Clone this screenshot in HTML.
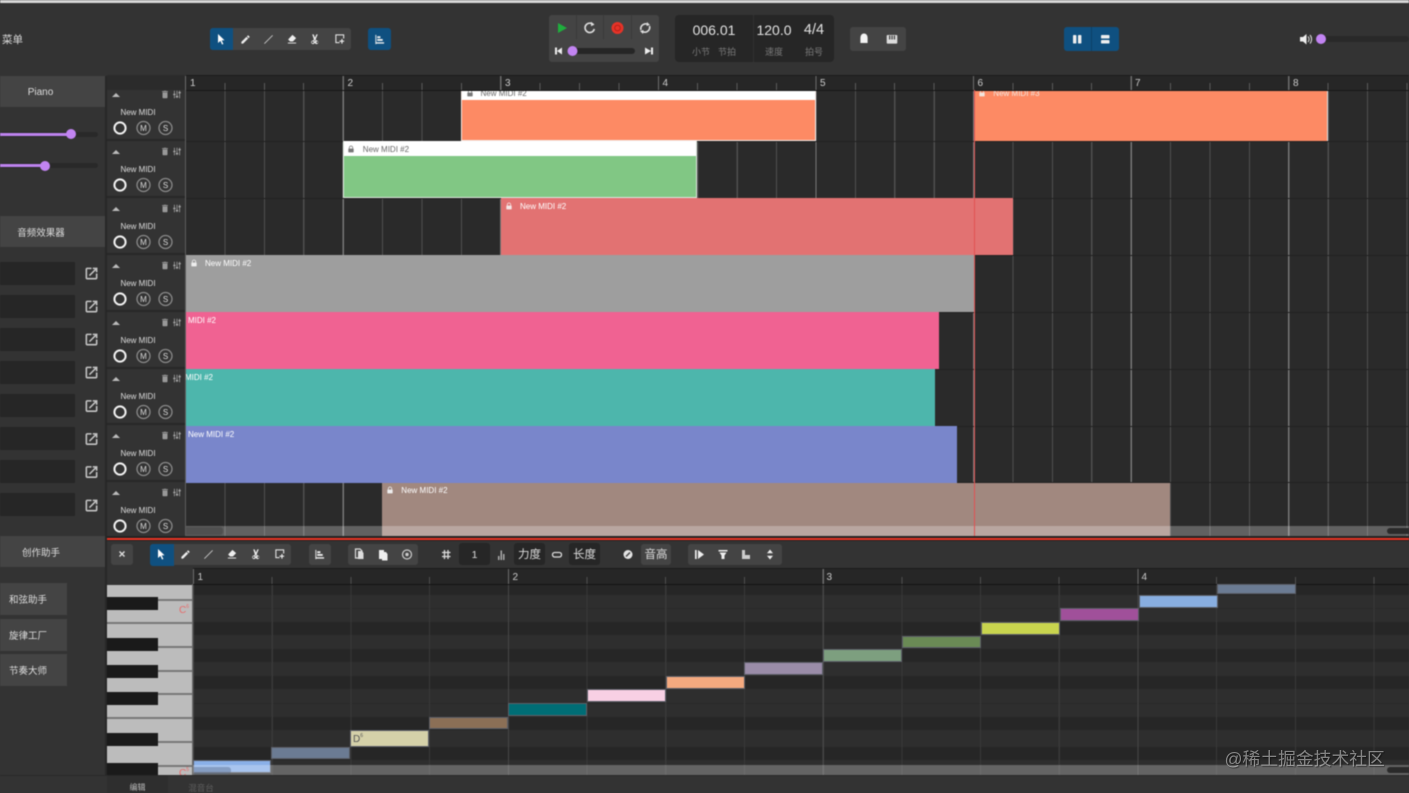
<!DOCTYPE html>
<html lang="zh"><head><meta charset="utf-8"><title>Piano</title>
<style>
html,body{margin:0;padding:0;width:1409px;height:793px;overflow:hidden;background:#333}
*{box-sizing:border-box}
#app{position:absolute;left:0;top:0;width:1409px;height:793px;overflow:hidden;background:#333;filter:blur(.45px);font-family:"Liberation Sans","Noto Sans CJK SC",sans-serif;color:#ddd}
#app div{position:absolute}
.b{background:#444}
.d{background:#262626}
.bl{background:#0f5080}
.c{text-align:center;white-space:nowrap}
.eff{left:0;width:75px;height:23px;background:#262626}
.row{left:0;width:78px;height:57px;border-bottom:2px solid #272727}
.nm{left:0;width:62px;top:24px;font-size:8px;line-height:10px;text-align:center;color:#ddd}
.row svg{position:absolute;left:0;top:0}
.clip{font-size:8px;line-height:10px;color:#fff;white-space:nowrap;overflow:hidden}
.rl{font-size:10px;line-height:12px;color:#ccc}
.note{border:1px solid #5c5f68;height:13px;width:79px}
.w{left:107px;width:85px;height:2px;background:#777}
.k{left:107px;width:51px;height:13px;background:#1a1a1a}
.band{left:193px;width:1216px;background:#262626}
svg{display:block;overflow:visible}
#wm{position:absolute;left:1224.500px;top:748px;font:17.800px/22px "Liberation Sans","Noto Sans CJK SC",sans-serif;color:rgba(215,215,215,.55);text-shadow:1px 1px 1px rgba(0,0,0,.45);white-space:nowrap}
</style></head><body>
<svg width="0" height="0" style="position:absolute">
<defs>
<symbol id="cur" viewBox="0 0 24 24"><path fill="#fff" d="M6 2l13 12.400-5.600.4 3.400 7.200-2.700 1.100-3.200-7.300L6 20z"/></symbol>
<symbol id="pen" viewBox="0 0 24 24"><path fill="#eee" d="M3 17.250V21h3.750L17.810 9.940l-3.750-3.750L3 17.250zM20.710 7.040a1 1 0 000-1.410l-2.340-2.340a1 1 0 00-1.410 0l-1.830 1.830 3.750 3.750 1.830-1.830z"/></symbol>
<symbol id="lin" viewBox="0 0 24 24"><path stroke="#ddd" stroke-width="1.800" fill="none" d="M3 21L21 3"/></symbol>
<symbol id="era" viewBox="0 0 24 24"><path fill="#eee" d="M13 3l8 7-7 7.500H8L3.500 13zM3 20h18v1.800H3z"/></symbol>
<symbol id="cut" viewBox="0 0 24 24"><path fill="#eee" d="M6 2h3l3 7 3-7h3l-4.500 10.500 1.200 2.700a4 4 0 11-2 1L12 13.500l-1.700 2.700a4 4 0 11-2-1l1.200-2.700zM7 17a2 2 0 100 4 2 2 0 000-4zm10 0a2 2 0 100 4 2 2 0 000-4z"/></symbol>
<symbol id="sel" viewBox="0 0 24 24"><path fill="none" stroke="#eee" stroke-width="2.200" d="M11 20H3V3h17v8"/><path fill="#eee" d="M15 12h2.500v3.500H21V18h-3.500v4H15v-4h-4v-2.500h4z"/></symbol>
<symbol id="ali" viewBox="0 0 24 24"><path fill="#eee" d="M3 2h2v20H3zM7 5h7v4H7zM7 11h12v4H7zM5 18h17v3H5z"/></symbol>
<symbol id="tr" viewBox="0 0 24 24"><path fill="#999" d="M6 19c0 1.100.9 2 2 2h8c1.100 0 2-.9 2-2V7H6v12zM19 4h-3.500l-1-1h-5l-1 1H5v2h14V4z"/></symbol>
<symbol id="mx" viewBox="0 0 24 24"><path fill="none" stroke="#aaa" stroke-width="2" d="M5 2v8M5 15v7M12 2v15M12 21v1M19 2v3M19 9v13"/><path fill="#aaa" d="M2 10h6v4H2zM9 16h6v4H9zM16 5h6v4h-6z"/></symbol>
<symbol id="ext" viewBox="0 0 24 24"><path fill="#c4c4c4" d="M19 19H5V5h7V2.500H5C3.600 2.500 2.500 3.600 2.500 5v14c0 1.400 1.100 2.500 2.500 2.500h14c1.400 0 2.500-1.100 2.500-2.500v-7H19v7zM14 2.500V5h3.300l-9.500 9.500 1.700 1.700L19 6.700V10h2.500V2.500H14z"/></symbol>
<symbol id="lock" viewBox="0 0 12 12"><path fill="none" stroke="currentColor" stroke-width="1.200" d="M3.500 6V4a2.500 2.500 0 015 0v2"/><rect x="2" y="5.500" width="8" height="5.500" fill="currentColor" rx=".6"/></symbol>
<symbol id="track" viewBox="0 0 78 57">
<path fill="#bbb" d="M5 13l4-4 4 4z"/>
<use href="#tr" x="53" y="5.500" width="10" height="10"/>
<use href="#mx" x="65.500" y="6" width="9" height="9"/>
<circle cx="13" cy="44" r="5.600" fill="none" stroke="#f2f2f2" stroke-width="2"/>
<circle cx="36.500" cy="44" r="6.500" fill="none" stroke="#8a8a8a" stroke-width="1.300"/>
<circle cx="58.500" cy="44" r="6.500" fill="none" stroke="#8a8a8a" stroke-width="1.300"/>
<text x="36.500" y="47" font-family="Liberation Sans" font-size="8" fill="#ddd" text-anchor="middle">M</text>
<text x="58.500" y="47" font-family="Liberation Sans" font-size="8" fill="#ddd" text-anchor="middle">S</text>
</symbol>
</defs></svg>
<div id="app">
<div style="left:0;top:0;width:1409px;height:3px;background:#d8d8d8"></div>

<!-- top toolbar -->
<div style="left:2px;top:33px;font-size:10.500px;line-height:14px;color:#ddd">菜单</div>
<div class="b" style="left:210px;top:28px;width:141px;height:22px;border-radius:3px"></div>
<div class="bl" style="left:210px;top:28px;width:23px;height:22px;border-radius:3px 0 0 3px"></div>
<div class="bl" style="left:368px;top:28px;width:23px;height:22px;border-radius:3px"></div>
<svg style="position:absolute;left:0;top:0" width="1409" height="80">
<use href="#cur" x="215" y="33" width="12" height="12"/>
<use href="#pen" x="240" y="34" width="11" height="11"/>
<use href="#lin" x="263" y="34" width="11" height="11"/>
<use href="#era" x="286.500" y="33.500" width="11" height="11"/>
<use href="#cut" x="309.500" y="33.500" width="11" height="11"/>
<use href="#sel" x="334.500" y="33.500" width="11" height="11"/>
<use href="#ali" x="374" y="34" width="11" height="11"/>
</svg>

<div class="b" style="left:549px;top:15px;width:110px;height:47px;border-radius:3px"></div>
<div style="left:576px;top:15px;width:1px;height:24px;background:#3a3a3a"></div>
<div style="left:603px;top:15px;width:1px;height:24px;background:#3a3a3a"></div>
<div style="left:631px;top:15px;width:1px;height:24px;background:#3a3a3a"></div>
<div class="d" style="left:572px;top:48px;width:63px;height:6px;border-radius:3px"></div>
<div class="d" style="left:675px;top:15px;width:159px;height:47px;border-radius:4px"></div>
<div style="left:753px;top:15px;width:1px;height:47px;background:#303030"></div>
<div class="c" style="left:684px;top:21px;width:60px;font-size:14px;line-height:18px;color:#e2e2e2">006.01</div>
<div class="c" style="left:744px;top:21px;width:60px;font-size:14px;line-height:18px;color:#e2e2e2">120.0</div>
<div class="c" style="left:794px;top:21px;width:40px;font-size:14.500px;line-height:18px;color:#e2e2e2">4/4</div>
<div class="c" style="left:686px;top:46px;width:30px;font-size:9px;line-height:13px;color:#7a7a7a">小节</div>
<div class="c" style="left:712px;top:46px;width:30px;font-size:9px;line-height:13px;color:#7a7a7a">节拍</div>
<div class="c" style="left:759px;top:46px;width:30px;font-size:9px;line-height:13px;color:#7a7a7a">速度</div>
<div class="c" style="left:799px;top:46px;width:30px;font-size:9px;line-height:13px;color:#7a7a7a">拍号</div>
<div class="b" style="left:850px;top:27px;width:56px;height:24px;border-radius:3px"></div>
<div class="bl" style="left:1064px;top:27px;width:55px;height:24px;border-radius:3px"></div>
<div style="left:1091px;top:27px;width:1px;height:24px;background:#0b4068"></div>
<div style="left:1321px;top:36px;width:88px;height:6px;background:#292929;border-radius:3px"></div>
<svg style="position:absolute;left:0;top:0" width="1409" height="80">
<path fill="#1fae3d" d="M558 23l9 5-9 5z"/>
<path fill="none" stroke="#ddd" stroke-width="1.600" d="M593.500 25a4.700 4.700 0 10.800 4"/><path fill="#ddd" d="M591 21.800l3.500 2.700-3.500 1.700z"/>
<circle cx="617.500" cy="28" r="6" fill="#e53328"/><circle cx="617.500" cy="28" r="2.800" fill="none" stroke="#b52018" stroke-width="1"/>
<path fill="none" stroke="#ddd" stroke-width="1.600" d="M641 30a4.800 4.800 0 017-5.500M649.500 26a4.800 4.800 0 01-7 5.500"/><path fill="#ddd" d="M647 22l3 3-3.500 1zM643 34l-3-3 3.500-1z"/>
<path fill="#eee" d="M555 47.500h2v7h-2zM562 47.500v7l-5-3.500z"/>
<path fill="#eee" d="M652 47.500h2v7h-2zM646 47.500v7l6-3.500z" transform="translate(-1 0)"/>
<circle cx="572.500" cy="51" r="5" fill="#c284f2"/>
<path fill="#f4f4f4" d="M864 33.500c-2.500 0-3.600 2.200-3.600 4.700V43h7.200v-4.800c0-2.500-1.100-4.700-3.600-4.700z"/>
<path fill="#ddd" d="M887.500 35h9a.8.800 0 01.8.800v7a.8.800 0 01-.8.800h-9a.8.800 0 01-.8-.8v-7a.8.800 0 01.8-.8z"/><path fill="#444" d="M889 35.500h1.300v4H889zM891.400 35.500h1.300v4h-1.300zM893.800 35.500h1.300v4h-1.300z"/>
<rect x="1073" y="35" width="3.400" height="8.500" rx=".8" fill="#eee"/><rect x="1078" y="35" width="3.400" height="8.500" rx=".8" fill="#eee"/>
<rect x="1101" y="35" width="8.500" height="3.500" rx=".8" fill="#eee"/><rect x="1101" y="40" width="8.500" height="3.500" rx=".8" fill="#eee"/>
<path fill="#eee" d="M1300 37v4.500h3l3.500 3v-10.500l-3.500 3z"/><path fill="none" stroke="#ddd" stroke-width="1" d="M1308 36.500a4 4 0 010 5.500M1310 35a6.500 6.500 0 010 8.500"/>
<circle cx="1321" cy="39" r="5" fill="#c284f2"/>
</svg>

<!-- left panel -->
<div style="left:105px;top:76px;width:2px;height:699px;background:#272727"></div>
<div class="b c" style="left:0;top:76px;width:105px;height:31px;font-size:10px;line-height:33px;padding-right:24px">Piano</div>
<div style="left:0;top:132px;width:98px;height:5px;background:#292929;border-radius:3px"></div>
<div style="left:0;top:132.500px;width:71px;height:3px;background:#bd83ee"></div>
<div style="left:66px;top:129px;width:10px;height:10px;border-radius:50%;background:#c284f2"></div>
<div style="left:0;top:163px;width:98px;height:5px;background:#292929;border-radius:3px"></div>
<div style="left:0;top:164px;width:45px;height:3px;background:#bd83ee"></div>
<div style="left:40px;top:161px;width:10px;height:10px;border-radius:50%;background:#c284f2"></div>
<div class="b c" style="left:0;top:216px;width:105px;height:31px;font-size:9.500px;line-height:35.500px;padding-right:23px">音频效果器</div>
<div class="eff" style="top:262px"></div>
<div class="eff" style="top:295px"></div>
<div class="eff" style="top:328px"></div>
<div class="eff" style="top:361px"></div>
<div class="eff" style="top:394px"></div>
<div class="eff" style="top:427px"></div>
<div class="eff" style="top:460px"></div>
<div class="eff" style="top:493px"></div>
<svg style="position:absolute;left:84px;top:260px" width="16" height="260">
<use href="#ext" x="0" y="6" width="15" height="15"/>
<use href="#ext" x="0" y="39" width="15" height="15"/>
<use href="#ext" x="0" y="72" width="15" height="15"/>
<use href="#ext" x="0" y="105" width="15" height="15"/>
<use href="#ext" x="0" y="138.500" width="15" height="15"/>
<use href="#ext" x="0" y="171.500" width="15" height="15"/>
<use href="#ext" x="0" y="204.500" width="15" height="15"/>
<use href="#ext" x="0" y="238" width="15" height="15"/>
</svg>
<div class="b c" style="left:0;top:536px;width:105px;height:31px;font-size:9.500px;line-height:35.500px;padding-right:23px">创作助手</div>
<div class="b c" style="left:0;top:583px;width:67px;height:32px;font-size:9.500px;line-height:35px;padding-right:11px">和弦助手</div>
<div class="b c" style="left:0;top:619px;width:67px;height:32px;font-size:9.500px;line-height:35px;padding-right:11px">旋律工厂</div>
<div class="b c" style="left:0;top:654px;width:67px;height:32px;font-size:9.500px;line-height:35px;padding-right:11px">节奏大师</div>

<!-- tracks list -->
<div style="left:107px;top:75px;width:78px;height:15px;background:#2b2b2b"></div>
<div style="left:107px;top:90px;width:78px;height:446px;overflow:hidden;background:#333">
  <div class="row" style="top:-6.500px"><div class="nm">New MIDI</div><svg width="78" height="57"><use href="#track" width="78" height="57"/></svg></div>
  <div class="row" style="top:50.500px"><div class="nm">New MIDI</div><svg width="78" height="57"><use href="#track" width="78" height="57"/></svg></div>
  <div class="row" style="top:107.500px"><div class="nm">New MIDI</div><svg width="78" height="57"><use href="#track" width="78" height="57"/></svg></div>
  <div class="row" style="top:164.500px"><div class="nm">New MIDI</div><svg width="78" height="57"><use href="#track" width="78" height="57"/></svg></div>
  <div class="row" style="top:221.500px"><div class="nm">New MIDI</div><svg width="78" height="57"><use href="#track" width="78" height="57"/></svg></div>
  <div class="row" style="top:278px"><div class="nm">New MIDI</div><svg width="78" height="57"><use href="#track" width="78" height="57"/></svg></div>
  <div class="row" style="top:335px"><div class="nm">New MIDI</div><svg width="78" height="57"><use href="#track" width="78" height="57"/></svg></div>
  <div class="row" style="top:391.500px;border-bottom:0"><div class="nm">New MIDI</div><svg width="78" height="57"><use href="#track" width="78" height="57"/></svg></div>
</div>

<!-- arrangement ruler -->
<div style="left:186px;top:75px;width:1223px;height:16px;background:#262626;border-top:1px solid #1b1b1b;border-bottom:1px solid #161616"></div>
<div style="left:185.300px;top:83px;width:1224px;height:7px;background:repeating-linear-gradient(90deg,#5c5c5c 0 1px,transparent 1px 39.400px)"></div>
<div style="left:185.300px;top:76px;width:1224px;height:14px;background:repeating-linear-gradient(90deg,#6d6d6d 0 1.200px,transparent 1.200px 157.600px)"></div>
<div class="rl" style="left:190px;top:78px">1</div><div class="rl" style="left:347.500px;top:78px">2</div><div class="rl" style="left:505px;top:78px">3</div><div class="rl" style="left:662.500px;top:78px">4</div><div class="rl" style="left:820px;top:78px">5</div><div class="rl" style="left:977.500px;top:78px">6</div><div class="rl" style="left:1135px;top:78px">7</div><div class="rl" style="left:1293px;top:78px">8</div>

<!-- arrangement grid -->
<div style="left:185px;top:91px;width:1224px;height:445px;background:#2a2a2a"></div>
<div style="left:185.300px;top:91px;width:1224px;height:445px;background:repeating-linear-gradient(90deg,#4f4f4f 0 1.200px,transparent 1.200px 39.400px)"></div>
<div style="left:185.300px;top:91px;width:1224px;height:445px;background:repeating-linear-gradient(90deg,#777 0 1.200px,transparent 1.200px 157.600px)"></div>
<div style="left:184.500px;top:90px;width:1.500px;height:446px;background:#5e5e5e"></div>
<div style="left:186px;top:140.500px;width:1223px;height:1px;background:#222"></div>
<div style="left:186px;top:197.500px;width:1223px;height:1px;background:#222"></div>
<div style="left:186px;top:254.500px;width:1223px;height:1px;background:#222"></div>
<div style="left:186px;top:311.500px;width:1223px;height:1px;background:#222"></div>
<div style="left:186px;top:368.500px;width:1223px;height:1px;background:#222"></div>
<div style="left:186px;top:425.500px;width:1223px;height:1px;background:#222"></div>
<div style="left:186px;top:481.500px;width:1223px;height:1px;background:#222"></div>

<!-- clips -->
<div class="clip" style="left:461px;top:90.500px;width:355px;height:50.500px;background:#fd8a64;border:1px solid #f4e9e4;border-top:0"><div style="left:-1px;top:0;width:355px;height:9px;background:#fff"></div><div style="left:18.500px;top:-2px;color:#666">New MIDI #2</div><svg style="position:absolute;left:3.500px;top:-2px;color:#777" width="8" height="8"><use href="#lock" width="8" height="8"/></svg></div>
<div class="clip" style="left:973.800px;top:90.500px;width:354.500px;height:50.500px;background:#fd8a64;border-right:1px solid #ddd"><div style="left:19.500px;top:-2px;color:#f3e6df">New MIDI #3</div><svg style="position:absolute;left:4.500px;top:-2px;color:#f3e6df" width="8" height="8"><use href="#lock" width="8" height="8"/></svg></div>
<div class="clip" style="left:343.300px;top:141px;width:354px;height:57px;background:#81c784;border:1px solid #dfe8df;border-top:0"><div style="left:-1px;top:0;width:354px;height:15px;background:#fff"></div><div style="left:18.500px;top:4px;color:#666">New MIDI #2</div><svg style="position:absolute;left:3px;top:3.500px;color:#777" width="8" height="8"><use href="#lock" width="8" height="8"/></svg></div>
<div class="clip" style="left:501px;top:198px;width:511.500px;height:57px;background:#e27272"><div style="left:19px;top:4px">New MIDI #2</div><svg style="position:absolute;left:4px;top:3.500px;color:#f4e6e6" width="8" height="8"><use href="#lock" width="8" height="8"/></svg></div>
<div class="clip" style="left:186px;top:255px;width:788px;height:57px;background:#9e9e9e"><div style="left:19px;top:4px">New MIDI #2</div><svg style="position:absolute;left:3.500px;top:3.500px;color:#eee" width="8" height="8"><use href="#lock" width="8" height="8"/></svg></div>
<div class="clip" style="left:186px;top:312px;width:752.500px;height:57px;background:#f06292"><div style="left:2px;top:4px">MIDI #2</div></div>
<div class="clip" style="left:186px;top:369px;width:748.500px;height:57px;background:#4db6ac"><div style="left:-1px;top:4px">MIDI #2</div></div>
<div class="clip" style="left:186px;top:426px;width:770.500px;height:56.500px;background:#7986cb"><div style="left:2px;top:4px">New MIDI #2</div></div>
<div class="clip" style="left:382.300px;top:482.500px;width:788px;height:53.500px;background:#a1887f"><div style="left:19px;top:3.500px">New MIDI #2</div><svg style="position:absolute;left:4px;top:3.500px;color:#eee" width="8" height="8"><use href="#lock" width="8" height="8"/></svg></div>

<div style="left:186px;top:526px;width:1223px;height:10px;background:rgba(255,255,255,.26)"></div>
<div style="left:186px;top:526.500px;width:37px;height:8px;background:rgba(60,60,60,.45);border-radius:0 3px 3px 0"></div>
<div style="left:1387px;top:527.500px;width:22px;height:6px;background:#2a2a2a;border-radius:3px 0 0 3px"></div>
<div style="left:973.800px;top:90px;width:1.200px;height:446px;background:#e05252"></div>

<!-- red divider -->
<div style="left:107px;top:536px;width:1302px;height:5px;background:#222"></div>
<div style="left:107px;top:537.500px;width:1302px;height:2.200px;background:#ea3323"></div>

<!-- lower toolbar -->
<div class="b" style="left:111px;top:544px;width:22px;height:21px;border-radius:3px"></div>
<div class="b" style="left:150px;top:544px;width:141px;height:21px;border-radius:3px"></div>
<div class="bl" style="left:150px;top:543.500px;width:24px;height:22px;border-radius:3px 0 0 3px"></div>
<div class="b" style="left:309px;top:544px;width:22px;height:21px;border-radius:3px"></div>
<div class="b" style="left:348px;top:544px;width:70px;height:21px;border-radius:3px"></div>
<div class="d c" style="left:459px;top:543px;width:31px;height:22px;border-radius:3px;font-size:10.500px;line-height:25px">1</div>
<div class="d c" style="left:514px;top:543px;width:31px;height:22px;border-radius:3px;font-size:11.500px;line-height:24px">力度</div>
<div class="d c" style="left:569px;top:543px;width:31px;height:22px;border-radius:3px;font-size:11.500px;line-height:24px">长度</div>
<div class="b c" style="left:641px;top:544px;width:30px;height:21px;border-radius:3px;font-size:11.500px;line-height:23px">音高</div>
<div class="b" style="left:688px;top:544px;width:94px;height:21px;border-radius:3px"></div>
<svg style="position:absolute;left:0;top:536px" width="1409" height="34">
<path stroke="#ddd" stroke-width="1.400" d="M119.500 15.500l5 5M124.500 15.500l-5 5"/>
<use href="#cur" x="155" y="12" width="12" height="12"/>
<use href="#pen" x="180" y="13" width="11" height="11"/>
<use href="#lin" x="203" y="13" width="11" height="11"/>
<use href="#era" x="226.500" y="12.500" width="11" height="11"/>
<use href="#cut" x="250.500" y="12.500" width="11" height="11"/>
<use href="#sel" x="274.500" y="12.500" width="11" height="11"/>
<use href="#ali" x="314" y="13" width="11" height="11"/>
<path fill="none" stroke="#ddd" stroke-width="1.200" d="M355.500 22v-9h4.500l2 2v7z"/><path fill="#ddd" d="M358 15h4l1.500 2v6H358z"/>
<path fill="#eee" d="M379 14h5v9h-5z"/><path fill="#eee" d="M382 16h4l1.500 2v6.500H382z"/>
<circle cx="407" cy="18.500" r="4.500" fill="none" stroke="#ccc" stroke-width="1.200"/><circle cx="407" cy="18.500" r="1.700" fill="#ccc"/>
<path stroke="#ddd" stroke-width="1.300" d="M444.500 14v9M448 14v9M442 16.500h8.500M442 20.500h8.500"/>
<path fill="#aaa" d="M498 20h1.500v4H498zM500.500 14.500h1.500V24h-1.500zM503 18h1.500v6H503z"/>
<rect x="552.500" y="16.500" width="9" height="4.500" rx="2.200" fill="none" stroke="#ddd" stroke-width="1.300"/>
<circle cx="628" cy="18.500" r="4.500" fill="#e4e4e4"/><path stroke="#444" stroke-width="1.500" d="M626 20.500l4-4"/>
<path fill="#eee" d="M695 14h1.700v9H695zM698 14l6 4.500-6 4.500z"/>
<path fill="#eee" d="M718.500 14h9v1.500h-9zM719.500 16.500h7l-2 3v3.500h-3v-3.500z"/>
<path fill="#ccc" d="M742 14h3v5h5v4h-8z"/>
<path fill="#eee" d="M770 13.500l3 3.700h-6zM770 23.500l3-3.700h-6z"/>
</svg>

<!-- piano roll ruler -->
<div style="left:193px;top:568px;width:1216px;height:16.500px;background:#262626;border-top:1px solid #1c1c1c;border-bottom:1px solid #141414"></div>
<div style="left:192.500px;top:577px;width:1217px;height:7px;background:repeating-linear-gradient(90deg,#4f4f4f 0 1px,transparent 1px 78.700px)"></div>
<div style="left:192.500px;top:569px;width:1217px;height:15px;background:repeating-linear-gradient(90deg,#6d6d6d 0 1.200px,transparent 1.200px 314.800px)"></div>
<div class="rl" style="left:197.500px;top:572px">1</div><div class="rl" style="left:512.500px;top:572px">2</div><div class="rl" style="left:826.500px;top:572px">3</div><div class="rl" style="left:1141.500px;top:572px">4</div>

<!-- piano roll grid -->
<div style="left:193px;top:584.500px;width:1216px;height:191px;background:#2e2e2e"></div>
<div class="band" style="top:585px;height:10px"></div>
<div class="band" style="top:608px;height:1px;background:#292929"></div>
<div class="band" style="top:622px;height:13px"></div>
<div class="band" style="top:649px;height:13px"></div>
<div class="band" style="top:676px;height:12.500px"></div>
<div class="band" style="top:703px;height:1px;background:#292929"></div>
<div class="band" style="top:717px;height:12.500px"></div>
<div class="band" style="top:747px;height:13px"></div>
<div style="left:192.500px;top:584.500px;width:1217px;height:191px;background:repeating-linear-gradient(90deg,#393939 0 1.100px,transparent 1.100px 78.700px)"></div>
<div style="left:192.500px;top:584.500px;width:1217px;height:191px;background:repeating-linear-gradient(90deg,#464646 0 1.200px,transparent 1.200px 314.800px)"></div>

<!-- piano keys -->
<div style="left:107px;top:584.500px;width:85.500px;height:190.500px;background:#bcbcbc"></div>
<div style="left:191.500px;top:584px;width:1.500px;height:191px;background:#6a6a6a"></div>
<div class="w" style="top:598.500px"></div><div class="w" style="top:622px"></div><div class="w" style="top:646px"></div><div class="w" style="top:669.500px"></div><div class="w" style="top:693px"></div><div class="w" style="top:717px"></div><div class="w" style="top:740.500px"></div><div class="w" style="top:764.500px"></div>
<div class="k" style="top:597px"></div><div class="k" style="top:638px"></div><div class="k" style="top:664.500px"></div><div class="k" style="top:692px"></div><div class="k" style="top:732.500px"></div><div class="k" style="top:763px"></div>
<div style="left:179px;top:603.500px;width:14px;font-size:10px;line-height:14px;color:#e76a6a;white-space:nowrap">C<sup style="font-size:5px;vertical-align:5px;line-height:0">6</sup></div>
<div style="left:179px;top:767px;width:14px;height:8px;overflow:hidden;font-size:10px;line-height:14px;color:#e76a6a;white-space:nowrap">C<sup style="font-size:5px;vertical-align:5px;line-height:0">5</sup></div>

<!-- notes -->
<div class="note" style="left:192.500px;top:760px;height:13px;background:#8ab0e8;width:78px"></div>
<div class="note" style="left:271px;top:747px;height:12px;background:#6b7b93"></div>
<div class="note" style="left:350px;top:729.500px;height:17px;background:#d5d1a9;color:#555;font-size:10px;line-height:17px;padding-left:2px;white-space:nowrap">D<sup style="font-size:5px;vertical-align:5px;line-height:0">6</sup></div>
<div class="note" style="left:428.500px;top:716.500px;height:12.500px;background:#8b6f56"></div>
<div class="note" style="left:507.500px;top:702.500px;height:13.500px;background:#006d75"></div>
<div class="note" style="left:586.500px;top:689px;height:12.500px;background:#f8d0e4"></div>
<div class="note" style="left:665.500px;top:676px;height:12.500px;background:#f4a97f"></div>
<div class="note" style="left:743.500px;top:662px;height:13px;background:#9a8ca8"></div>
<div class="note" style="left:822.500px;top:649px;height:12.500px;background:#7d9f7f"></div>
<div class="note" style="left:901.500px;top:635.500px;height:12.500px;background:#6a8a55"></div>
<div class="note" style="left:980.500px;top:622px;height:12.500px;background:#c8d44e"></div>
<div class="note" style="left:1059.500px;top:608px;height:13px;background:#a0509a"></div>
<div class="note" style="left:1138.500px;top:595px;height:12.500px;background:#88aee0"></div>
<div class="note" style="left:1217px;top:584px;height:10px;background:#6b7b93"></div>

<div style="left:193px;top:765px;width:1216px;height:10px;background:rgba(255,255,255,.26)"></div>
<div style="left:194px;top:766.500px;width:37px;height:7px;background:rgba(90,110,140,.45);border-radius:0 3px 3px 0"></div>
<div style="left:1387px;top:767px;width:22px;height:6px;background:#2a2a2a;border-radius:3px 0 0 3px"></div>

<!-- bottom tabs -->
<div style="left:0;top:775px;width:1409px;height:18px;background:#333;border-top:1px solid #292929"></div>
<div class="c" style="left:107px;top:776px;width:61px;height:17px;background:#2e2e2e;font-size:8px;line-height:23px;color:#bbb">编辑</div>
<div class="c" style="left:186px;top:776px;width:30px;height:17px;font-size:8.500px;line-height:24px;color:#5e5e5e">混音台</div>
</div>
<div id="wm">@稀土掘金技术社区</div>
</body></html>
